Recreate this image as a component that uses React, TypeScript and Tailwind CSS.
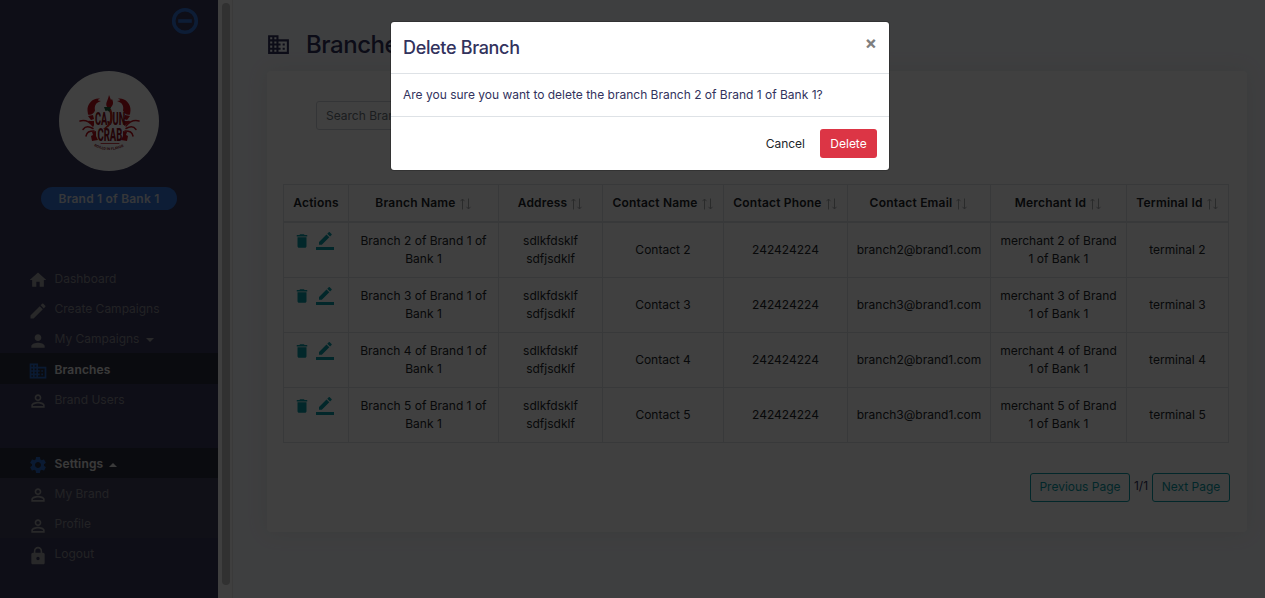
import React from "react";
import {
  MdBusiness,
  MdDelete,
  MdEdit,
  MdHome,
  MdLock,
  MdPerson,
  MdPersonOutline,
  MdSettings,
} from "react-icons/md";

function CrabLogo() {
  return (
    <svg viewBox="0 0 80 80" className="h-20 w-20">
      <g fill="#c0101c">
        <path d="M31 17.500c-7-1-13 5-12.500 12l.5 4c3 1 6-1 7-4-1-5 1-8 6-9.500l-3-.5c0-1 1-1.500 2-2z" />
        <path d="M49 17.500c7-1 13 5 12.500 12l-.5 4c-3 1-6-1-7-4 1-5-1-8-6-9.500l3-.5c0-1-1-1.500-2-2z" />
        <path d="M39 27c-4-4 0-7 1-13 1 2 1.500 4 2 5l1-1c2 4 1 7-2 9z" />
        <path d="M19 35l3 4 3-1-1-4zM61 35l-3 4-3-1 1-4z" />
        <path d="M23 40c-2 0-4-1-4 1l6 4v-5zM57 40c2 0 4-1 4 1l-6 4v-5z" />
        <path d="M27 50l-4 1 1 3-2 1 1 5 6-1-2-4zM54 50l4 1-1 3 2 1-1 5-6-1 2-4z" />
      </g>
      <g fill="none" stroke="#c0101c" strokeWidth="1.500" strokeLinecap="round">
        <path d="M24 45c-4-5-9-6-13-5M24 47.500c-5-3-8-2-10 1M25 50c-5 0-7 1-8 5" />
        <path d="M57 45c4-5 9-6 13-5M57 47.500c5-3 8-2 10 1M56 50c5 0 7 1 8 5" />
        <path d="M32 62.500h18" strokeWidth="0.8" />
      </g>
      <g fill="#8c1020" fontFamily="Roboto, sans-serif" fontWeight="800">
        <text transform="translate(26 43.500) scale(.54 1)" fontSize="19" textLength="56" lengthAdjust="spacingAndGlyphs">
          CAJUN
        </text>
        <text transform="translate(28.500 59.500) scale(.54 1)" fontSize="19" textLength="46" lengthAdjust="spacingAndGlyphs">
          CRAB
        </text>
      </g>
      <path d="M39 28c5 8 2 15-5 20 9-1 12-11 8-20z" fill="#d0281c" />
      <path d="M35 26l7 0-1.500 5-2-1.500-2 .5z" fill="#1f5a34" />
      <path id="tagline" d="M25 65Q40 73 56 65" fill="none" />
      <text fontSize="3.600" fontWeight="700" fontFamily="Roboto, sans-serif" fill="#8a1020">
        <textPath href="#tagline">BOILED IN FLAVOR</textPath>
      </text>
    </svg>
  );
}

function EditIcon() {
  return (
    <svg viewBox="0 0 24 24" className="size-[18px]" fill="currentColor">
      <path d="M17.750 7L14 3.250l-10 10V17h3.750l10-10zm2.960-2.960a1 1 0 0 0 0-1.410L18.370.290a1 1 0 0 0-1.410 0L15 2.250 18.750 6l1.960-1.960z" />
      <path d="M0 20h24v4H0z" />
    </svg>
  );
}

function CollapseIcon() {
  return (
    <svg viewBox="0 0 28 28" className="size-7" fill="none" stroke="currentColor" strokeWidth="3.600">
      <circle cx="14" cy="14" r="11.300" />
      <path d="M7.200 14h13.600" />
    </svg>
  );
}

type NavItemProps = {
  icon: React.ReactNode;
  label: string;
  active?: boolean;
  caret?: "up" | "down";
  className?: string;
  iconClass?: string;
  labelClass?: string;
};

function NavItem({
  icon,
  label,
  active,
  caret,
  className = "h-[30px]",
  iconClass = "pt-[4px]",
  labelClass = "",
}: NavItemProps) {
  return (
    <a
      className={`flex items-center pl-[28px] text-[12px] ${className} ${
        active ? "bg-[#2b2e3c] font-semibold text-[#e8e8e8]" : "font-normal text-[#888890]"
      }`}
    >
      <span className={`${iconClass} ${active ? "text-[#2a68c8]" : "text-[#a0a0a2]"}`}>{icon}</span>
      <span className={`ml-[6.500px] ${active ? "tracking-[0.15px]" : ""} ${labelClass}`}>{label}</span>
      {caret && (
        <svg
          viewBox="0 0 8 4"
          className={`h-1 w-2 ${
            caret === "up" ? "ml-[6px] mt-[4px] rotate-180 text-[#e8e8e8]" : "ml-[7px] mt-[2px] text-[#a0a0a2]"
          }`}
          fill="currentColor"
        >
          <path d="M0 0h8L4 4z" />
        </svg>
      )}
    </a>
  );
}

function Sidebar() {
  return (
    <aside className="h-full w-[218px] shrink-0 bg-[#38385c]">
      <div className="flex h-[71px] justify-end pr-[19px] pt-[7px] text-[#3474d8]">
        <CollapseIcon />
      </div>
      <div className="mx-auto flex size-[100px] items-center justify-center rounded-full bg-white">
        <CrabLogo />
      </div>
      <div className="mx-auto mt-4 flex h-[23px] w-[136px] items-center justify-center rounded-full bg-[#3474d8] text-[12px] font-semibold tracking-[0.2px] text-[#d8dce4]">
        Brand 1 of Bank 1
      </div>
      <nav className="pt-[54px]">
        <NavItem icon={<MdHome size={20} />} label="Dashboard" iconClass="pt-[2px]" />
        <NavItem icon={<MdEdit size={20} />} label="Create Campaigns" />
        <NavItem icon={<MdPerson size={20} />} label="My Campaigns" caret="down" />
        <NavItem
          icon={<MdBusiness size={20} />}
          label="Branches"
          active
          className="-mt-px mb-px h-[31px]"
          labelClass="pt-[2px]"
        />
        <NavItem icon={<MdPersonOutline size={20} />} label="Brand Users" iconClass="pt-[2px]" />
      </nav>
      <nav className="pt-[33px]">
        <NavItem icon={<MdSettings size={20} />} label="Settings" active caret="up" labelClass="pt-[2px]" />
        <div className="bg-[#40405e]">
          <NavItem icon={<MdPersonOutline size={20} />} label="My Brand" labelClass="pt-[2px]" />
          <NavItem icon={<MdPersonOutline size={20} />} label="Profile" iconClass="pt-[5px]" labelClass="pt-[2px]" />
        </div>
        <NavItem icon={<MdLock size={20} />} label="Logout" iconClass="pt-[6px]" labelClass="pt-[2px]" />
      </nav>
    </aside>
  );
}

function SortArrows() {
  return (
    <svg viewBox="0 0 12 12" className="ml-[4px] mt-[2px] h-3 w-3 shrink-0" fill="none" stroke="#a8aaac" strokeWidth="1">
      <path d="M2.500 11.500V1M.5 3.200L2.500 1l2 2.200M8.500 .5V11M6.500 8.800L8.500 11l2-2.200" />
    </svg>
  );
}

const columns = [
  { name: "Actions", width: "w-[65px]" },
  { name: "Branch Name", width: "w-[150px]", sort: true },
  { name: "Address", width: "w-[104px]", sort: true },
  { name: "Contact Name", width: "w-[121px]", sort: true },
  { name: "Contact Phone", width: "w-[124px]", sort: true },
  { name: "Contact Email", width: "w-[143px]", sort: true },
  { name: "Merchant Id", width: "w-[136px]", sort: true },
  { name: "Terminal Id", width: "w-[102px]", sort: true },
];

const rows = [
  { n: 2, email: "branch2@brand1.com" },
  { n: 3, email: "branch3@brand1.com" },
  { n: 4, email: "branch2@brand1.com" },
  { n: 5, email: "branch3@brand1.com" },
];

function BranchTable() {
  const cell = "border-b border-r border-[#dee2e6] p-0 align-middle";
  return (
    <table className="w-[946px] table-fixed border-separate border-spacing-0 border-l border-t border-[#dee2e6] text-center text-[12px] leading-[18px] text-[#212529]">
      <thead>
        <tr className="h-[38px]">
          {columns.map((c) => (
            <th
              key={c.name}
              className={`border-b-2 border-r border-[#dee2e6] p-0 font-semibold tracking-[0.2px] ${c.width}`}
            >
              <span className="flex items-center justify-center whitespace-nowrap">
                {c.name}
                {c.sort && <SortArrows />}
              </span>
            </th>
          ))}
        </tr>
      </thead>
      <tbody>
        {rows.map((r) => (
          <tr key={r.n} className="h-[55px]">
            <td className={cell}>
              <span className="flex items-center gap-[5px] pb-[18px] pl-[9px] text-[#0a9ca6]">
                <MdDelete size={18} />
                <EditIcon />
              </span>
            </td>
            <td className={cell}>
              Branch {r.n} of Brand 1 of
              <br />
              Bank 1
            </td>
            <td className={cell}>
              sdlkfdsklf
              <br />
              sdfjsdklf
            </td>
            <td className={cell}>Contact {r.n}</td>
            <td className={cell}>242424224</td>
            <td className={cell}>{r.email}</td>
            <td className={cell}>
              merchant {r.n} of Brand
              <br />1 of Bank 1
            </td>
            <td className={cell}>terminal {r.n}</td>
          </tr>
        ))}
      </tbody>
    </table>
  );
}

function Pagination() {
  const button =
    "flex h-[29px] items-center justify-center rounded-[3px] border border-[#0a9ca6] pb-[2px] text-[#0a9ca6]";
  return (
    <div className="mr-[1px] mt-[30px] flex justify-end gap-1 text-[12px]">
      <button className={`${button} w-[100px]`}>Previous Page</button>
      <span className="flex h-[26px] w-[14px] items-center justify-center whitespace-nowrap text-[#32325d]">1/1</span>
      <button className={`${button} w-[78px]`}>Next Page</button>
    </div>
  );
}

function DeleteDialog() {
  return (
    <div
      role="dialog"
      className="absolute left-[390px] top-[21px] w-[500px] rounded-[4px] border border-black/20 bg-white bg-clip-padding text-[12px] text-[#32325d]"
    >
      <div className="flex h-[52px] items-start justify-between border-b border-[#dee2e6] px-3">
        <h5 className="pt-3 text-[18px] font-medium leading-[27px] tracking-[-0.330px]">Delete Branch</h5>
        <button className="pt-3 text-[18px] font-bold leading-[18px] text-[#7f7f7f]">×</button>
      </div>
      <p className="flex h-[42px] items-center px-3">
        Are you sure you want to delete the branch Branch 2 of Brand 1 of Bank 1?
      </p>
      <div className="flex h-[54px] items-center justify-end gap-[5px] border-t border-[#dee2e6] px-3">
        <button className="h-[29px] px-[10px] text-[#212529]">Cancel</button>
        <button className="h-[29px] w-[57px] rounded-[3px] bg-[#dc3545] text-white">Delete</button>
      </div>
    </div>
  );
}

export default function App() {
  return (
    <div className="relative h-[598px] w-[1265px] overflow-hidden font-['Inter',sans-serif]">
      <div className="flex h-full">
        <Sidebar />
        <div className="h-full w-[15px] shrink-0 border-r border-[#e8e8e8] bg-[#fafafa] pl-1 pt-[3px]">
          <div className="h-[582px] w-2 rounded-full bg-[#c1c1c1]" />
        </div>
        <main className="h-full flex-1 bg-[#f8f9fe] pl-[34px]">
          <h1 className="flex h-[71px] items-center pt-[18px] text-[24px] font-medium tracking-[-0.450px] text-[#32325d]">
            <MdBusiness size={25} className="-ml-px -mt-px" />
            <span className="ml-[15px]">Branches</span>
          </h1>
          <section className="h-[461px] w-[980px] rounded-[4px] bg-white px-4 pt-[30px] shadow-[0_0_20px_rgba(136,152,120,0.15)]">
            <div className="ml-[33px] flex h-[29px] w-[240px] items-center rounded-[3px] border border-[#ced4da] px-[9px] text-[12px] text-[#6c757d]">
              Search Branches
            </div>
            <div className="pt-[54px]">
              <BranchTable />
            </div>
            <Pagination />
          </section>
        </main>
      </div>
      <div className="absolute inset-0 bg-black/75" />
      <DeleteDialog />
    </div>
  );
}
